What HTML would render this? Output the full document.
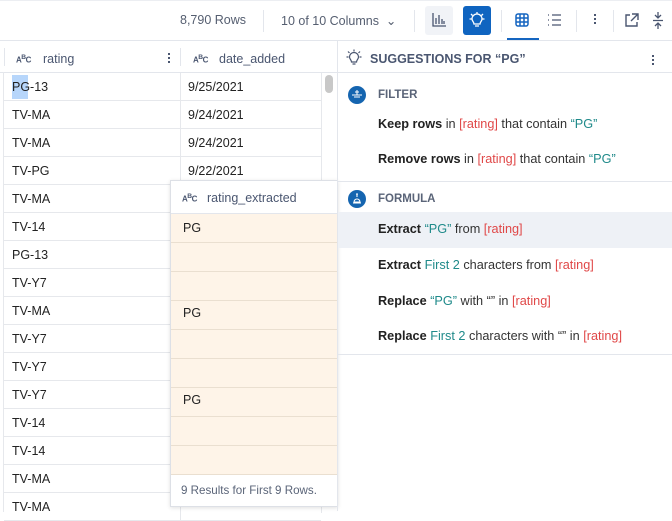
<!DOCTYPE html>
<html><head><style>
*{margin:0;padding:0;box-sizing:border-box}
body{width:672px;height:510px;overflow:hidden;background:#fff;font-family:"Liberation Sans",sans-serif;color:#222;position:relative;font-size:12.5px}
.a{position:absolute}
.hl{border-top:1px solid #e3e6ec}
.cell{position:absolute;left:4px;width:317px;height:28px;border-bottom:1px solid #e6e8ec}
.cell span{position:absolute;top:7px;left:8px}
.cell b{position:absolute;left:176px;top:0;height:28px;border-left:1px solid #e6e8ec}
.cell i{position:absolute;left:184px;top:7px;font-style:normal}
.abc{font-size:8px;color:#4a5670;font-weight:bold;letter-spacing:-0.5px}
.hd{color:#4a5670;font-size:12.5px}
.pr{position:absolute;left:0;width:166px;height:29px;border-bottom:1px solid #eadfd0;background:#fef4e8}
.pr span{position:absolute;left:12px;top:7px}
.sug{position:absolute;left:378px;font-size:12.7px;color:#333}
.sug b{color:#222}
.t{color:#1f8a8a}.r{color:#e04848}
.sec{position:absolute;left:378px;font-size:11.5px;font-weight:bold;color:#5a6478}
.ic{position:absolute;left:348px;width:18px;height:18px;border-radius:50%;background:#1565b0}
</style></head><body>
<!-- toolbar -->
<div class="a hl" style="left:0;top:0;width:672px;border-color:#eceef2"></div>
<div class="a" style="left:180px;top:13px;color:#555e70;font-size:12.5px">8,790 Rows</div>
<div class="a" style="left:263px;top:10px;width:1px;height:22px;background:#e3e6ec"></div>
<div class="a" style="left:281px;top:13px;color:#555e70;font-size:12.5px">10 of 10 Columns &nbsp;⌄</div>
<div class="a" style="left:414px;top:10px;width:1px;height:22px;background:#e3e6ec"></div>
<div class="a" style="left:425px;top:6px;width:28px;height:29px;background:#f1f3f7;border-radius:3px"></div>
<svg class="a" style="left:431px;top:12px" width="16" height="16" viewBox="0 0 16 16" fill="none" stroke="#4a5670" stroke-width="1.3"><path d="M2 1v13h13M5 12V6M8 12V3M11 12V7M13 12V9"/></svg>
<div class="a" style="left:463px;top:6px;width:28px;height:29px;background:#0f64c0;border-radius:3px"></div>
<svg class="a" style="left:469px;top:11px" width="16" height="18" viewBox="0 0 16 18" fill="none" stroke="#fff" stroke-width="1.3"><path d="M8 1v2M2 3l1.5 1.5M14 3l-1.5 1.5M0.5 8h2M13.5 8h2M5 13c0-2-2-3-2-5a5 5 0 0110 0c0 2-2 3-2 5zM6 15h4"/></svg>
<div class="a" style="left:501px;top:10px;width:1px;height:22px;background:#e3e6ec"></div>
<svg class="a" style="left:515px;top:13px" width="14" height="14" viewBox="0 0 14 14" fill="none" stroke="#1565c0" stroke-width="1.5"><rect x="1" y="1" width="12" height="12" rx="2"/><path d="M5 1v12M9 1v12M1 5h12M1 9h12"/></svg>
<div class="a" style="left:507px;top:38px;width:32px;height:2px;background:#1565c0"></div>
<svg class="a" style="left:547px;top:13px" width="15" height="14" viewBox="0 0 15 14" fill="none" stroke="#4a5670" stroke-width="1.3"><path d="M1 2h1M1 7h1M1 12h1M5 2h9M5 7h9M5 12h9"/></svg>
<div class="a" style="left:576px;top:10px;width:1px;height:22px;background:#e3e6ec"></div>
<div class="a" style="left:594px;top:14px;width:2px;height:2px;background:#4a5670;box-shadow:0 4px #4a5670,0 8px #4a5670"></div>
<div class="a" style="left:613px;top:10px;width:1px;height:22px;background:#e3e6ec"></div>
<svg class="a" style="left:624px;top:13px" width="15" height="15" viewBox="0 0 15 15" fill="none" stroke="#4a5670" stroke-width="1.4"><path d="M6 2H2v11h11V9M8 1h6v6M14 1L7 8"/></svg>
<svg class="a" style="left:652px;top:12px" width="12" height="17" viewBox="0 0 12 17" fill="none" stroke="#4a5670" stroke-width="1.3"><path d="M6 0v6M3 3l3 3 3-3M1 8.5h10M6 17v-6M3 14l3-3 3 3"/></svg>
<div class="a hl" style="left:0;top:40px;width:672px"></div>
<!-- grid header -->
<div class="a" style="left:4px;top:48px;width:1px;height:18px;background:#e3e6ec"></div>
<div class="a abc" style="left:16px;top:54px">A<sup>B</sup>C</div>
<div class="a hd" style="left:43px;top:52px">rating</div>
<div class="a" style="left:168px;top:53px;width:2px;height:2px;background:#4a5670;box-shadow:0 4px #4a5670,0 8px #4a5670"></div>
<div class="a" style="left:180px;top:48px;width:1px;height:18px;background:#e3e6ec"></div>
<div class="a abc" style="left:193px;top:54px">A<sup>B</sup>C</div>
<div class="a hd" style="left:219px;top:52px">date_added</div>
<div class="a hl" style="left:0;top:72px;width:337px"></div>
<div class="a" style="left:12px;top:75px;width:16px;height:24px;background:#b7d6fb"></div>
<div class="a" style="left:0;top:72px;width:4px;height:440px;border-right:1px solid #e6e8ec"></div>
<div class="cell" style="top:73px"><span>PG-13</span><b></b><i>9/25/2021</i></div>
<div class="cell" style="top:101px"><span>TV-MA</span><b></b><i>9/24/2021</i></div>
<div class="cell" style="top:129px"><span>TV-MA</span><b></b><i>9/24/2021</i></div>
<div class="cell" style="top:157px"><span>TV-PG</span><b></b><i>9/22/2021</i></div>
<div class="cell" style="top:185px"><span>TV-MA</span><b></b></div>
<div class="cell" style="top:213px"><span>TV-14</span><b></b></div>
<div class="cell" style="top:241px"><span>PG-13</span><b></b></div>
<div class="cell" style="top:269px"><span>TV-Y7</span><b></b></div>
<div class="cell" style="top:297px"><span>TV-MA</span><b></b></div>
<div class="cell" style="top:325px"><span>TV-Y7</span><b></b></div>
<div class="cell" style="top:353px"><span>TV-Y7</span><b></b></div>
<div class="cell" style="top:381px"><span>TV-Y7</span><b></b></div>
<div class="cell" style="top:409px"><span>TV-14</span><b></b></div>
<div class="cell" style="top:437px"><span>TV-14</span><b></b></div>
<div class="cell" style="top:465px"><span>TV-MA</span><b></b></div>
<div class="cell" style="top:493px"><span>TV-MA</span><b></b></div>
<div class="a" style="left:321px;top:73px;width:16px;height:440px;background:#fff;border-left:1px solid #e6e8ec"></div>
<div class="a" style="left:325px;top:75px;width:8px;height:18px;background:#c8c8c8;border-radius:4px"></div>
<!-- popup -->
<div class="a" style="left:170px;top:180px;width:168px;height:327px;background:#fff;border:1px solid #dde0e6;box-shadow:0 1px 4px rgba(0,0,0,.12)">
 <div class="a abc" style="left:11px;top:12px">A<sup>B</sup>C</div>
 <div class="a hd" style="left:36px;top:10px">rating_extracted</div>
 <div class="a" style="left:0;top:32px;width:166px;height:261px;border-top:1px solid #e3e6ec">
  <div class="pr" style="top:0"><span>PG</span></div>
  <div class="pr" style="top:29px"></div>
  <div class="pr" style="top:58px"></div>
  <div class="pr" style="top:87px"><span style="top:5px">PG</span></div>
  <div class="pr" style="top:116px"></div>
  <div class="pr" style="top:145px"></div>
  <div class="pr" style="top:174px"><span style="top:5px">PG</span></div>
  <div class="pr" style="top:203px"></div>
  <div class="pr" style="top:232px"></div>
 </div>
 <div class="a" style="left:10px;top:303px;font-size:11.6px;color:#5a6478">9 Results for First 9 Rows.</div>
</div>
<!-- right panel -->
<div class="a" style="left:337px;top:41px;width:1px;height:470px;background:#e3e6ec"></div>
<svg class="a" style="left:346px;top:49px" width="16" height="17" viewBox="0 0 16 17" fill="none" stroke="#4a5670" stroke-width="1.2"><path d="M8 0.5v2M2 2.5l1.5 1.5M14 2.5l-1.5 1.5M0.5 8h2M13.5 8h2M5.5 13c0-2-2-3-2-5a4.5 4.5 0 019 0c0 2-2 3-2 5zM6.5 15h3"/></svg>
<div class="a" style="left:370px;top:52px;font-size:12.5px;font-weight:bold;color:#4a5670">SUGGESTIONS FOR “PG”</div>
<div class="a" style="left:652px;top:55px;width:2px;height:2px;background:#4a5670;box-shadow:0 4px #4a5670,0 8px #4a5670"></div>
<div class="a hl" style="left:338px;top:72px;width:334px"></div>
<div class="ic" style="top:86px"></div>
<svg class="a" style="left:351px;top:89px" width="12" height="12" viewBox="0 0 12 12" fill="none" stroke="#fff" stroke-width="1"><path d="M1 6h10M3 8h6M6 1v5M4 3l4 0"/></svg>
<div class="sec" style="top:89px">FILTER</div>
<div class="sug" style="top:117px"><b>Keep rows</b> in <span class="r">[rating]</span> that contain <span class="t">“PG”</span></div>
<div class="sug" style="top:152px"><b>Remove rows</b> in <span class="r">[rating]</span> that contain <span class="t">“PG”</span></div>
<div class="a hl" style="left:338px;top:181px;width:334px"></div>
<div class="ic" style="top:190px"></div>
<svg class="a" style="left:351px;top:193px" width="12" height="12" viewBox="0 0 12 12" fill="none" stroke="#fff" stroke-width="1.1"><path d="M5 1h2M6 1v3M3 9a3 3 0 016 0zM2 10h8"/></svg>
<div class="sec" style="top:193px">FORMULA</div>
<div class="a" style="left:338px;top:212px;width:334px;height:36px;background:#eef1f6"></div>
<div class="sug" style="top:222px"><b>Extract</b> <span class="t">“PG”</span> from <span class="r">[rating]</span></div>
<div class="sug" style="top:258px"><b>Extract</b> <span class="t">First 2</span> characters from <span class="r">[rating]</span></div>
<div class="sug" style="top:294px"><b>Replace</b> <span class="t">“PG”</span> with “” in <span class="r">[rating]</span></div>
<div class="sug" style="top:329px"><b>Replace</b> <span class="t">First 2</span> characters with “” in <span class="r">[rating]</span></div>
<div class="a hl" style="left:338px;top:354px;width:334px"></div>
</body></html>
